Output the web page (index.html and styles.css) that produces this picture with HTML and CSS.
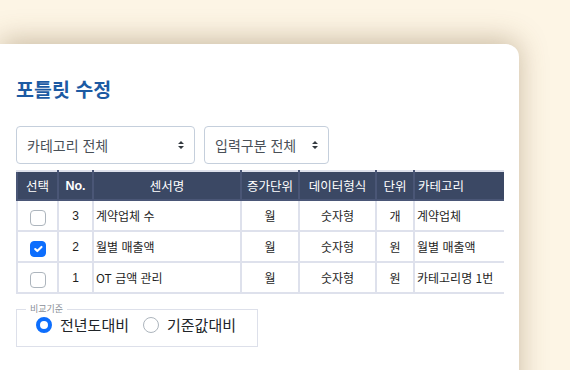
FILE: index.html
```html
<!DOCTYPE html>
<html lang="ko">
<head>
    <meta charset="UTF-8">
    <meta name="viewport" content="width=device-width, initial-scale=1.0">
    <title>포틀릿 수정</title>
    <link rel="stylesheet" href="styles.css">
</head>
<body>
    <div class="card">
        <h1 class="title">포틀릿 수정</h1>

        <div class="filters">
            <div class="select-wrap wide">
                <select class="form-select">
                    <option>카테고리 전체</option>
                </select>
                <svg class="arrow" width="8" height="10" viewBox="0 0 8 10"><path d="M1 4 L4 1 L7 4 Z M1 6 L4 9 L7 6 Z" fill="#343a40"/></svg>
            </div>
            <div class="select-wrap narrow">
                <select class="form-select">
                    <option>입력구분 전체</option>
                </select>
                <svg class="arrow" width="8" height="10" viewBox="0 0 8 10"><path d="M1 4 L4 1 L7 4 Z M1 6 L4 9 L7 6 Z" fill="#343a40"/></svg>
            </div>
        </div>

        <div class="table-wrap">
            <table>
                <colgroup>
                    <col style="width: 41px">
                    <col style="width: 35px">
                    <col style="width: 148px">
                    <col style="width: 58px">
                    <col style="width: 77px">
                    <col style="width: 38px">
                    <col style="width: 110px">
                </colgroup>
                <thead>
                    <tr>
                        <th>선택</th>
                        <th class="no">No.</th>
                        <th>센서명</th>
                        <th>증가단위</th>
                        <th>데이터형식</th>
                        <th>단위</th>
                        <th class="left">카테고리</th>
                    </tr>
                </thead>
                <tbody>
                    <tr>
                        <td><input type="checkbox" class="check"></td>
                        <td class="num">3</td>
                        <td class="left">계약업체 수</td>
                        <td>월</td>
                        <td>숫자형</td>
                        <td>개</td>
                        <td class="left">계약업체</td>
                    </tr>
                    <tr>
                        <td><input type="checkbox" class="check" checked></td>
                        <td class="num">2</td>
                        <td class="left">월별 매출액</td>
                        <td>월</td>
                        <td>숫자형</td>
                        <td>원</td>
                        <td class="left">월별 매출액</td>
                    </tr>
                    <tr>
                        <td><input type="checkbox" class="check"></td>
                        <td class="num">1</td>
                        <td class="left">OT 금액 관리</td>
                        <td>월</td>
                        <td>숫자형</td>
                        <td>원</td>
                        <td class="left">카테고리명 1번</td>
                    </tr>
                </tbody>
            </table>
        </div>

        <fieldset class="compare">
            <legend>비교기준</legend>
            <label class="radio"><input type="radio" name="base" checked> 전년도대비</label>
            <label class="radio"><input type="radio" name="base"> 기준값대비</label>
        </fieldset>
    </div>
</body>
</html>
```

FILE: styles.css
```css
html, body {
    margin: 0;
    height: 100%;
    overflow: hidden;
}
body {
    background-color: #fdf5e5;
    font-family: "Noto Sans CJK KR", "Noto Sans", sans-serif;
    color: #212529;
    padding-top: 44px;
    box-sizing: border-box;
}
.card {
    width: 519px;
    height: 400px;
    background: #fff;
    border-radius: 0 13px 0 0;
    box-shadow: 0 -4px 28px rgba(110, 80, 40, 0.35);
    padding: 28px 0 0 16px;
    box-sizing: border-box;
}
.title {
    margin: 0;
    font-size: 19.5px;
    font-weight: 700;
    line-height: 34px;
    color: #1c5aa3;
}
.filters {
    display: flex;
    gap: 9px;
    margin-top: 20px;
}
.select-wrap {
    position: relative;
}
.select-wrap.wide {
    width: 179px;
}
.select-wrap.narrow {
    width: 125px;
}
.form-select {
    appearance: none;
    -webkit-appearance: none;
    width: 100%;
    height: 38px;
    padding: 0 24px 0 10px;
    font-family: "Noto Sans CJK KR", sans-serif;
    font-size: 14px;
    color: #495057;
    background: #fff;
    border: 1px solid #c5cfdc;
    border-radius: 4px;
    box-sizing: border-box;
}
.arrow {
    position: absolute;
    right: 10px;
    top: 14px;
}
.table-wrap {
    width: 488px;
    overflow: hidden;
    margin-top: 6px;
}
table {
    border-collapse: collapse;
    table-layout: fixed;
    width: 507px;
    font-size: 12px;
}
th, td {
    border: 2px solid #dee1ec;
    text-align: center;
    padding: 0 2px;
    white-space: nowrap;
    overflow: hidden;
}
th {
    background-color: #3b4864;
    color: #fff;
    font-weight: 400;
    font-size: 12.5px;
    height: 27px;
    border-color: #4a5676;
    border-top-color: #dee1ec;
}
th.no {
    font-family: "Liberation Sans", Arial, sans-serif;
    font-weight: 700;
}
td {
    height: 29px;
    color: #1e1e1e;
}
td.num {
    font-family: "Liberation Sans", Arial, sans-serif;
}
.left {
    text-align: left;
}
th.left {
    padding-left: 3px;
}
.check {
    appearance: none;
    -webkit-appearance: none;
    width: 16px;
    height: 16px;
    margin: 4px 0 0;
    border: 1px solid #adb5bd;
    border-radius: 4px;
    background: #fff;
    vertical-align: top;
}
.check:checked {
    background-color: #0d6efd;
    border-color: #0d6efd;
    background-image: url("data:image/svg+xml,%3csvg xmlns='http://www.w3.org/2000/svg' viewBox='0 0 20 20'%3e%3cpath fill='none' stroke='%23fff' stroke-linecap='round' stroke-linejoin='round' stroke-width='3' d='M6 10l3 3l6-6'/%3e%3c/svg%3e");
    background-size: 100% 100%;
}
.compare {
    width: 242px;
    height: 43px;
    margin: 10px 0 0;
    padding: 0 0 0 19px;
    border: 1px solid #dde0ea;
    box-sizing: border-box;
    display: flex;
    align-items: flex-start;
    gap: 14px;
}
.compare legend {
    font-size: 9px;
    line-height: 10px;
    color: #8a8f98;
    padding: 0 4px;
    margin-left: -10px;
}
.radio {
    display: flex;
    align-items: center;
    gap: 8px;
    font-size: 15px;
    line-height: 22px;
    color: #212529;
}
.radio input {
    appearance: none;
    -webkit-appearance: none;
    width: 16px;
    height: 16px;
    margin: 0;
    border: 1px solid #adb5bd;
    border-radius: 50%;
    background: #fff;
}
.radio input:checked {
    border: 4.5px solid #0d6efd;
    box-sizing: border-box;
}
```
